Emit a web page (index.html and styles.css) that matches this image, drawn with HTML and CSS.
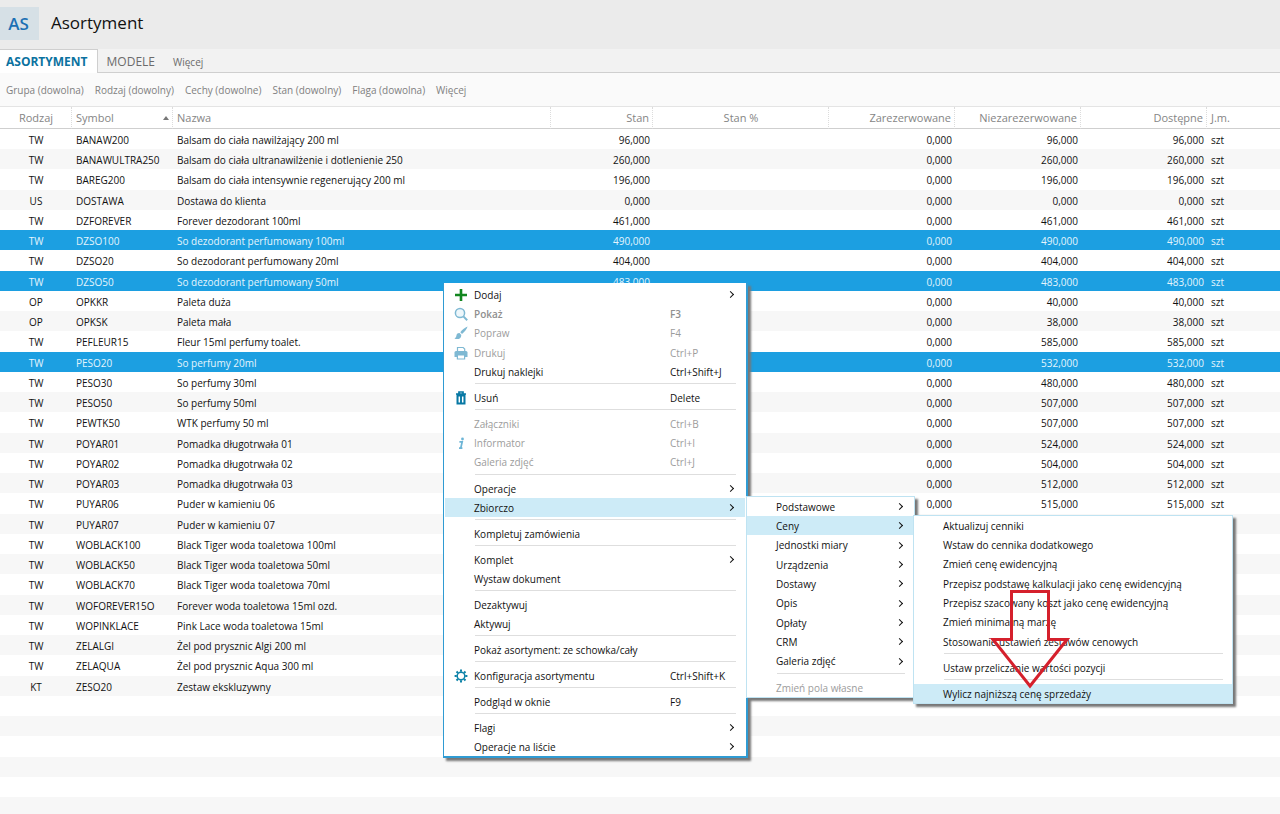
FILE: index.html
```html
<!DOCTYPE html>
<html lang="pl">
<head>
<meta charset="utf-8">
<title>Asortyment</title>
<link rel="stylesheet" href="styles.css">
</head>
<body>
<div class="app">
  <header class="titlebar">
    <span class="badge">AS</span>
    <h1 class="title">Asortyment</h1>
  </header>
  <nav class="tabs">
    <button class="tab tab-active">ASORTYMENT</button>
    <button class="tab">MODELE</button>
    <button class="tab tab-more">Więcej</button>
  </nav>
  <div class="filters">
    <button class="filter">Grupa (dowolna)</button>
    <button class="filter">Rodzaj (dowolny)</button>
    <button class="filter">Cechy (dowolne)</button>
    <button class="filter">Stan (dowolny)</button>
    <button class="filter">Flaga (dowolna)</button>
    <button class="filter">Więcej</button>
  </div>
  <main class="list">
    <table class="grid">
      <colgroup>
        <col class="c-kind"><col class="c-symbol"><col class="c-name"><col class="c-stock"><col class="c-percent"><col class="c-num"><col class="c-num"><col class="c-num"><col class="c-unit">
      </colgroup>
      <thead>
        <tr><th class="mid">Rodzaj</th><th class="sorted">Symbol</th><th>Nazwa</th><th class="num">Stan</th><th class="mid">Stan %</th><th class="num">Zarezerwowane</th><th class="num">Niezarezerwowane</th><th class="num">Dostępne</th><th>J.m.</th></tr>
      </thead>
      <tbody>
        <tr><td>TW</td><td>BANAW200</td><td>Balsam do ciała nawilżający 200 ml</td><td>96,000</td><td></td><td>0,000</td><td>96,000</td><td>96,000</td><td>szt</td></tr>
        <tr><td>TW</td><td>BANAWULTRA250</td><td>Balsam do ciała ultranawilżenie i dotlenienie 250</td><td>260,000</td><td></td><td>0,000</td><td>260,000</td><td>260,000</td><td>szt</td></tr>
        <tr><td>TW</td><td>BAREG200</td><td>Balsam do ciała intensywnie regenerujący 200 ml</td><td>196,000</td><td></td><td>0,000</td><td>196,000</td><td>196,000</td><td>szt</td></tr>
        <tr><td>US</td><td>DOSTAWA</td><td>Dostawa do klienta</td><td>0,000</td><td></td><td>0,000</td><td>0,000</td><td>0,000</td><td>szt</td></tr>
        <tr><td>TW</td><td>DZFOREVER</td><td>Forever dezodorant 100ml</td><td>461,000</td><td></td><td>0,000</td><td>461,000</td><td>461,000</td><td>szt</td></tr>
        <tr class="selected"><td>TW</td><td>DZSO100</td><td>So dezodorant perfumowany 100ml</td><td>490,000</td><td></td><td>0,000</td><td>490,000</td><td>490,000</td><td>szt</td></tr>
        <tr><td>TW</td><td>DZSO20</td><td>So dezodorant perfumowany 20ml</td><td>404,000</td><td></td><td>0,000</td><td>404,000</td><td>404,000</td><td>szt</td></tr>
        <tr class="selected"><td>TW</td><td>DZSO50</td><td>So dezodorant perfumowany 50ml</td><td>483,000</td><td></td><td>0,000</td><td>483,000</td><td>483,000</td><td>szt</td></tr>
        <tr><td>OP</td><td>OPKKR</td><td>Paleta duża</td><td></td><td></td><td>0,000</td><td>40,000</td><td>40,000</td><td>szt</td></tr>
        <tr><td>OP</td><td>OPKSK</td><td>Paleta mała</td><td></td><td></td><td>0,000</td><td>38,000</td><td>38,000</td><td>szt</td></tr>
        <tr><td>TW</td><td>PEFLEUR15</td><td>Fleur 15ml perfumy toalet.</td><td></td><td></td><td>0,000</td><td>585,000</td><td>585,000</td><td>szt</td></tr>
        <tr class="selected"><td>TW</td><td>PESO20</td><td>So perfumy 20ml</td><td></td><td></td><td>0,000</td><td>532,000</td><td>532,000</td><td>szt</td></tr>
        <tr><td>TW</td><td>PESO30</td><td>So perfumy 30ml</td><td></td><td></td><td>0,000</td><td>480,000</td><td>480,000</td><td>szt</td></tr>
        <tr><td>TW</td><td>PESO50</td><td>So perfumy 50ml</td><td></td><td></td><td>0,000</td><td>507,000</td><td>507,000</td><td>szt</td></tr>
        <tr><td>TW</td><td>PEWTK50</td><td>WTK perfumy 50 ml</td><td></td><td></td><td>0,000</td><td>507,000</td><td>507,000</td><td>szt</td></tr>
        <tr><td>TW</td><td>POYAR01</td><td>Pomadka długotrwała 01</td><td></td><td></td><td>0,000</td><td>524,000</td><td>524,000</td><td>szt</td></tr>
        <tr><td>TW</td><td>POYAR02</td><td>Pomadka długotrwała 02</td><td></td><td></td><td>0,000</td><td>504,000</td><td>504,000</td><td>szt</td></tr>
        <tr><td>TW</td><td>POYAR03</td><td>Pomadka długotrwała 03</td><td></td><td></td><td>0,000</td><td>512,000</td><td>512,000</td><td>szt</td></tr>
        <tr><td>TW</td><td>PUYAR06</td><td>Puder w kamieniu 06</td><td></td><td></td><td>0,000</td><td>515,000</td><td>515,000</td><td>szt</td></tr>
        <tr><td>TW</td><td>PUYAR07</td><td>Puder w kamieniu 07</td><td></td><td></td><td></td><td></td><td></td><td></td></tr>
        <tr><td>TW</td><td>WOBLACK100</td><td>Black Tiger woda toaletowa 100ml</td><td></td><td></td><td></td><td></td><td></td><td></td></tr>
        <tr><td>TW</td><td>WOBLACK50</td><td>Black Tiger woda toaletowa 50ml</td><td></td><td></td><td></td><td></td><td></td><td></td></tr>
        <tr><td>TW</td><td>WOBLACK70</td><td>Black Tiger woda toaletowa 70ml</td><td></td><td></td><td></td><td></td><td></td><td></td></tr>
        <tr><td>TW</td><td>WOFOREVER15O</td><td>Forever woda toaletowa 15ml ozd.</td><td></td><td></td><td></td><td></td><td></td><td></td></tr>
        <tr><td>TW</td><td>WOPINKLACE</td><td>Pink Lace woda toaletowa 15ml</td><td></td><td></td><td></td><td></td><td></td><td></td></tr>
        <tr><td>TW</td><td>ZELALGI</td><td>Żel pod prysznic Algi 200 ml</td><td></td><td></td><td></td><td></td><td></td><td></td></tr>
        <tr><td>TW</td><td>ZELAQUA</td><td>Żel pod prysznic Aqua 300 ml</td><td></td><td></td><td></td><td></td><td></td><td></td></tr>
        <tr><td>KT</td><td>ZESO20</td><td>Zestaw ekskluzywny</td><td></td><td></td><td></td><td></td><td></td><td></td></tr>
        <tr><td colspan="9"></td></tr>
        <tr><td colspan="9"></td></tr>
        <tr><td colspan="9"></td></tr>
        <tr><td colspan="9"></td></tr>
        <tr><td colspan="9"></td></tr>
        <tr><td colspan="9"></td></tr>
      </tbody>
    </table>
  </main>

  <div class="menu menu-main">
    <div class="group">
      <button class="item"><svg class="icon" viewBox="0 0 14 14"><path d="M7 1v12M1 7h12" stroke="#12861f" stroke-width="2.6" fill="none"/></svg><span class="label">Dodaj</span><span class="arrow"></span></button>
      <button class="item off strong" disabled><svg class="icon" viewBox="0 0 14 14"><circle cx="6" cy="6" r="4.6" fill="#eef7fb" stroke="#7fb9d3" stroke-width="1.5"/><path d="M9.4 9.4l3.8 3.8" stroke="#7fb9d3" stroke-width="2"/></svg><span class="label">Pokaż</span><span class="key">F3</span></button>
      <button class="item off" disabled><svg class="icon" viewBox="0 0 14 14"><path d="M13.600.6c-2.600.9-5.200 3-7.300 5.600l1.700 1.700C10.600 5.800 12.800 3.400 13.600.6zM5.500 7C3.400 6.900 2.500 8.300 2.400 9.700c-.1 1.200-.7 2.100-2 2.800 3.100 1.200 6.900.6 6.900-3.600z" fill="#7fb9d3"/></svg><span class="label">Popraw</span><span class="key">F4</span></button>
      <button class="item off" disabled><svg class="icon" viewBox="0 0 14 14"><path d="M3.500 6V1.500h5.700l1.500 1.500v3" fill="#fff" stroke="#7fb9d3" stroke-width="1.200"/><path d="M2 5h10q1.500 0 1.500 1.500V11H.5V6.500Q.5 5 2 5z" fill="#7fb9d3"/><path d="M3.400 9h7.200v4H3.400z" fill="#fff" stroke="#7fb9d3" stroke-width="1.200"/></svg><span class="label">Drukuj</span><span class="key">Ctrl+P</span></button>
      <button class="item"><span class="label">Drukuj naklejki</span><span class="key">Ctrl+Shift+J</span></button>
    </div>
    <div class="group">
      <button class="item"><svg class="icon" viewBox="0 0 14 14"><path d="M5 2.500V1h4v1.500M2 3h10" fill="none" stroke="#0878a4" stroke-width="1.700"/><path d="M2.500 3h9v10.500h-9z" fill="#0878a4"/><path d="M5.300 5.500v6M8.700 5.500v6" stroke="#fff" stroke-width="1.500"/></svg><span class="label">Usuń</span><span class="key">Delete</span></button>
    </div>
    <div class="group">
      <button class="item off" disabled><span class="label">Załączniki</span><span class="key">Ctrl+B</span></button>
      <button class="item off" disabled><svg class="icon" viewBox="0 0 14 14"><circle cx="8.500" cy="3" r="1.400" fill="#6db5d6"/><path d="M5.400 5.800h2.800L6.800 12M5 12.200h3.400" fill="none" stroke="#6db5d6" stroke-width="1.700"/></svg><span class="label">Informator</span><span class="key">Ctrl+I</span></button>
      <button class="item off" disabled><span class="label">Galeria zdjęć</span><span class="key">Ctrl+J</span></button>
    </div>
    <div class="group">
      <button class="item"><span class="label">Operacje</span><span class="arrow"></span></button>
      <button class="item active"><span class="label">Zbiorczo</span><span class="arrow"></span></button>
    </div>
    <div class="group">
      <button class="item"><span class="label">Kompletuj zamówienia</span></button>
    </div>
    <div class="group">
      <button class="item"><span class="label">Komplet</span><span class="arrow"></span></button>
      <button class="item"><span class="label">Wystaw dokument</span></button>
    </div>
    <div class="group">
      <button class="item"><span class="label">Dezaktywuj</span></button>
      <button class="item"><span class="label">Aktywuj</span></button>
    </div>
    <div class="group">
      <button class="item"><span class="label">Pokaż asortyment: ze schowka/cały</span></button>
    </div>
    <div class="group">
      <button class="item"><svg class="icon" viewBox="0 0 14 14"><circle cx="7" cy="7" r="3.800" fill="none" stroke="#0f83a8" stroke-width="1.500"/><path d="M7 .6v2.200M7 11.200v2.200M.6 7h2.200M11.200 7h2.200M2.500 2.500L4 4M10 10l1.500 1.500M2.500 11.500L4 10M10 4l1.500-1.500" stroke="#0f83a8" stroke-width="2"/></svg><span class="label">Konfiguracja asortymentu</span><span class="key">Ctrl+Shift+K</span></button>
    </div>
    <div class="group">
      <button class="item"><span class="label">Podgląd w oknie</span><span class="key">F9</span></button>
    </div>
    <div class="group">
      <button class="item"><span class="label">Flagi</span><span class="arrow"></span></button>
      <button class="item"><span class="label">Operacje na liście</span><span class="arrow"></span></button>
    </div>
  </div>

  <div class="menu submenu menu-bulk">
    <div class="group">
      <button class="item"><span class="label">Podstawowe</span><span class="arrow"></span></button>
      <button class="item active"><span class="label">Ceny</span><span class="arrow"></span></button>
      <button class="item"><span class="label">Jednostki miary</span><span class="arrow"></span></button>
      <button class="item"><span class="label">Urządzenia</span><span class="arrow"></span></button>
      <button class="item"><span class="label">Dostawy</span><span class="arrow"></span></button>
      <button class="item"><span class="label">Opis</span><span class="arrow"></span></button>
      <button class="item"><span class="label">Opłaty</span><span class="arrow"></span></button>
      <button class="item"><span class="label">CRM</span><span class="arrow"></span></button>
      <button class="item"><span class="label">Galeria zdjęć</span><span class="arrow"></span></button>
    </div>
    <div class="group">
      <button class="item off" disabled><span class="label">Zmień pola własne</span></button>
    </div>
  </div>

  <div class="menu submenu menu-prices">
    <div class="group">
      <button class="item"><span class="label">Aktualizuj cenniki</span></button>
      <button class="item"><span class="label">Wstaw do cennika dodatkowego</span></button>
      <button class="item"><span class="label">Zmień cenę ewidencyjną</span></button>
      <button class="item"><span class="label">Przepisz podstawę kalkulacji jako cenę ewidencyjną</span></button>
      <button class="item"><span class="label">Przepisz szacowany koszt jako cenę ewidencyjną</span></button>
      <button class="item"><span class="label">Zmień minimalną marżę</span></button>
      <button class="item"><span class="label">Stosowanie ustawień zestawów cenowych</span></button>
    </div>
    <div class="group">
      <button class="item"><span class="label">Ustaw przeliczanie wartości pozycji</span></button>
    </div>
    <div class="group">
      <button class="item active"><span class="label">Wylicz najniższą cenę sprzedaży</span></button>
    </div>
  </div>

  <svg class="pointer" viewBox="0 0 80 100"><path d="M21.500 2.500h37v48H77L40 97 3 50.500h18.500z" fill="none" stroke="#d5202c" stroke-width="3"/></svg>
</div>
</body>
</html>
```

FILE: styles.css
```css
* { box-sizing: border-box; }

body {
  margin: 0;
  font-family: "Open Sans", "Noto Sans", sans-serif;
  font-size: 10px;
  color: #111;
  background: #fff;
}

button {
  font: inherit;
  color: inherit;
  background: none;
  border: 0;
  padding: 0;
  margin: 0;
  text-align: left;
  white-space: nowrap;
}

.app {
  position: relative;
  height: 100vh;
  overflow: hidden;
  display: flex;
  flex-direction: column;
}

.titlebar {
  flex: none;
  display: flex;
  align-items: center;
  gap: 12px;
  height: 49px;
  padding-bottom: 2px;
  background: #ebebeb;
}

.badge {
  width: 39px;
  padding-right: 2px;
  line-height: 33px;
  text-align: center;
  font-size: 17px;
  font-weight: 600;
  color: #1c70b4;
  background: #d6e0e6;
}

.title {
  margin: 0;
  font-size: 17px;
  line-height: 24px;
  padding-bottom: 2px;
  font-weight: 400;
  color: #111;
}

.tabs {
  flex: none;
  display: flex;
  height: 24px;
  background: #f2f2f2;
  border-bottom: 1px solid #cfcfcf;
}

.tab {
  padding: 2px 9px 0;
  font-size: 12px;
  color: #6b6b6b;
}

.tab-active {
  height: 24px;
  padding: 0 9px 0 6px;
  font-weight: 700;
  color: #0b72a0;
  background: #fff;
  border-top: 1px solid #cfcfcf;
  border-right: 1px solid #cfcfcf;
}

.tab-more { font-size: 10px; }

.filters {
  flex: none;
  display: flex;
  align-items: center;
  gap: 11px;
  height: 34px;
  padding: 0 6px;
  color: #808080;
  background: #fafafa;
  border-bottom: 1px solid #e4e4e4;
}

.list {
  flex: 1;
  min-height: 0;
  overflow: hidden;
}

.grid {
  width: 100%;
  table-layout: fixed;
  border-collapse: separate;
  border-spacing: 0;
}

.c-kind { width: 72px; }
.c-symbol { width: 101px; }
.c-stock { width: 102px; }
.c-percent { width: 176px; }
.c-num { width: 126px; }
.c-unit { width: 73px; }

.grid th {
  height: 22px;
  padding: 0 3px 0 4px;
  font-size: 11px;
  font-weight: 400;
  text-align: left;
  color: #858585;
  border-bottom: 1px solid #cfcfcf;
  border-right: 1px dotted #dcdcdc;
}

.grid th:last-child { border-right: 0; }
.grid th.num { text-align: right; }
.grid th.mid { text-align: center; }

.sorted::after {
  content: "";
  float: right;
  margin-top: 6px;
  border: 3px solid transparent;
  border-top: 0;
  border-bottom: 4px solid #777;
}

.grid td {
  height: 20px;
  padding: 1px 4px 0;
  line-height: 16px;
  white-space: nowrap;
}

.grid tbody tr:nth-child(4n+3) td { height: 21px; }
.grid tbody tr:nth-child(even) { background: #f7f7f7; }

.grid td:first-child { text-align: center; }

.grid td:nth-child(n+4):nth-child(-n+8) {
  padding-right: 3px;
  text-align: right;
}

.grid tbody tr.selected {
  color: #e4f5fd;
  background: #1c9fe1;
}

.menu {
  position: absolute;
  background: #fff;
  box-shadow: 3px 3px 2px #777;
}

.menu-main {
  left: 443px;
  top: 283px;
  width: 305px;
  padding: 2px 1px 0;
  border: solid #2f9bd3;
  border-width: 0 2px 2px 1px;
}

.submenu { border: 1px solid #bfe3f2; }

.menu-bulk {
  left: 746px;
  top: 496px;
  width: 169px;
}

.menu-prices {
  left: 913px;
  top: 515px;
  width: 320px;
}

.group + .group::before {
  content: "";
  display: block;
  height: 1px;
  margin: 2px 9px 4px 30px;
  background: #dedede;
}

.item {
  position: relative;
  display: flex;
  align-items: center;
  width: 100%;
  height: 19px;
  padding-left: 29px;
}

.item:nth-child(3n) { height: 20px; }
.active { background: #cdebf7; }
.off { color: #9c9c9c; }
.strong { font-weight: 600; color: #8f8f8f; }

.icon {
  position: absolute;
  left: 9px;
  width: 14px;
  height: 14px;
}

.label { flex: 1; }
.key { width: 75px; }

.arrow {
  width: 5px;
  height: 5px;
  margin-right: 12px;
  border: solid #111;
  border-width: 1px 1px 0 0;
  transform: rotate(45deg);
}

.pointer {
  position: absolute;
  left: 990px;
  top: 589px;
  width: 80px;
  height: 100px;
}
```
